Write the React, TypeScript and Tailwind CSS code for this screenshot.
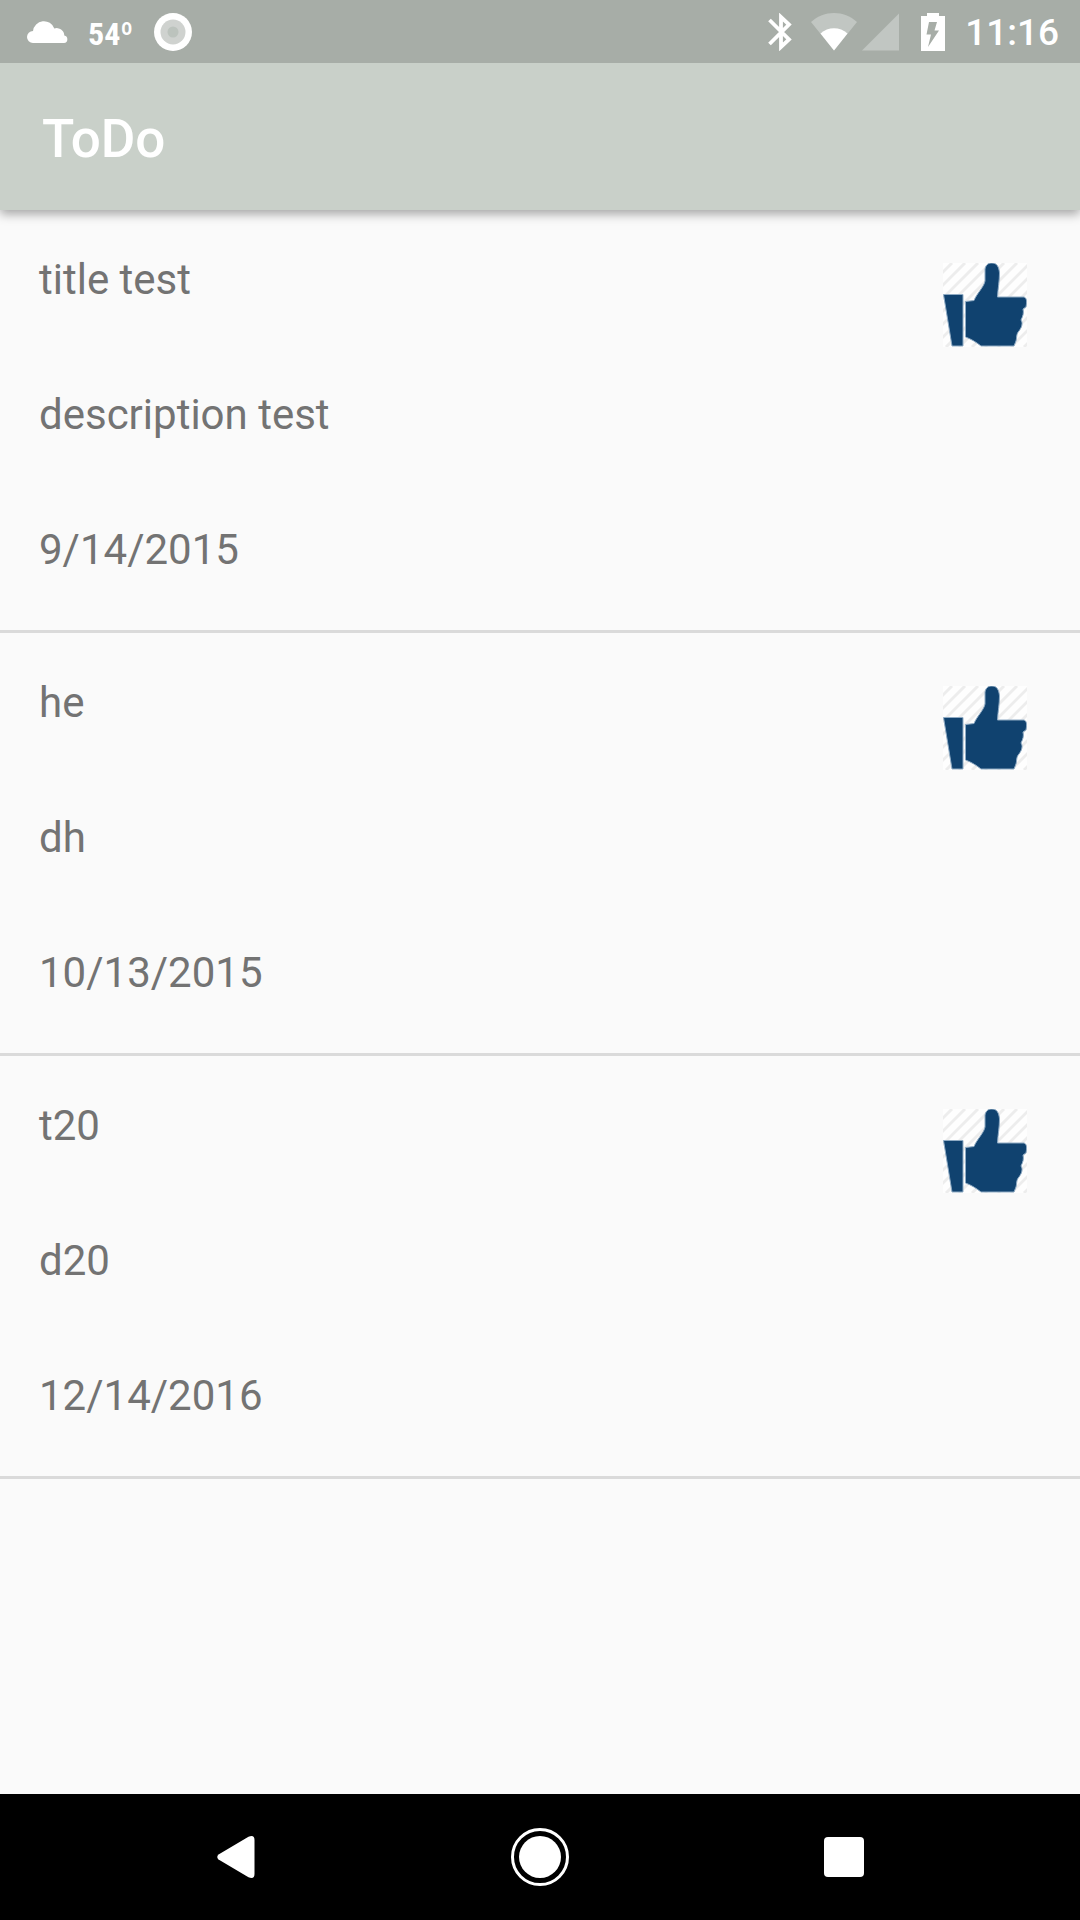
const items = [
  { title: 'title test', description: 'description test', date: '9/14/2015' },
  { title: 'he', description: 'dh', date: '10/13/2015' },
  { title: 't20', description: 'd20', date: '12/14/2016' },
];

const hatch = Array.from({ length: 14 }, (_, i) => i * 13 - 4);

function ThumbIcon() {
  return (
    <svg viewBox="0 0 84 84" className="h-[84px] w-[84px] shrink-0" role="img" aria-label="Thumbs up">
      <rect width="84" height="84" fill="#fefefe" />
      <g stroke="#ededed" strokeWidth="3">
        {hatch.map((x) => (
          <line key={x} x1={x} y1="0" x2={x - 84} y2="84" />
        ))}
      </g>
      <path
        fill="#10426f"
        stroke="#8fabc4"
        strokeWidth="1"
        d="M0.500 31.500 H20 V83 H9 Z M22.500 38.500 L31 37.500 C34 30 41 24 42 18 L42 6 C43 1 46 0 49 0 C54 0 56 4 56.500 10 C56.500 18 55 25 54.500 34 L81 34 C84 35 84 39 83 44 L80 46 C81 50 80 53 78 57 C80 60 79 64 76 68 C73 71 74 75 73 78 L71 83 H38 C33 79 28 76 22.500 74 Z"
      />
    </svg>
  );
}

function StatusBar() {
  return (
    <div className="z-20 flex h-[63px] items-center justify-between bg-[#a7ada7] pl-[27px] pr-[21px] text-white">
      <div className="flex items-center">
        <svg viewBox="0 0 41 23" className="h-[23px] w-[41px]" fill="#fff" aria-hidden="true">
          <path d="M6 23 A5.8 5.8 0 0 1 6 11 A11 11 0 0 1 27.300 8.500 A7.500 7.500 0 0 1 37.300 15.500 A3.800 3.800 0 0 1 37 23 Z" />
        </svg>
        <span className="ml-5 w-[66px] pt-1 font-['Roboto_Condensed',Roboto,sans-serif] text-[32px] leading-[42px] font-bold">
          54º
        </span>
        <svg viewBox="0 0 38 38" className="h-[38px] w-[38px]" aria-hidden="true">
          <circle cx="19" cy="19" r="19" fill="#fff" />
          <circle cx="19" cy="19" r="12.500" fill="#cfd2cf" />
          <circle cx="19" cy="19" r="5.500" fill="#bcc3bd" />
        </svg>
      </div>
      <div className="flex items-center">
        <svg viewBox="0 0 24 38" className="h-[38px] w-[24px]" fill="none" stroke="#fff" strokeWidth="3.800" aria-hidden="true">
          <path d="M1.500 7 L21 26.500 L13 34 V4 L21 11.500 L1.500 31" />
        </svg>
        <svg viewBox="0 0 46 38" className="ml-[19px] h-[38px] w-[46px]" aria-hidden="true">
          <path d="M0 9 C13 -3 33 -3 46 9 L23 37.500 Z" fill="#c1c6c2" />
          <path d="M9.500 20.500 C17 13.500 29 13.500 36.500 20.500 L23 37.500 Z" fill="#fff" />
        </svg>
        <svg viewBox="0 0 37 38" className="ml-[5px] h-[38px] w-[37px]" aria-hidden="true">
          <path d="M37 0.500 V37.500 H0 Z" fill="#c1c6c2" />
        </svg>
        <svg viewBox="0 0 24 38" className="ml-[22px] h-[38px] w-[24px]" aria-hidden="true">
          <path d="M6 0 H18 V3 H24 V38 H0 V3 H6 Z" fill="#fff" />
          <path d="M8 9 H16 L13.500 17.500 H18 L7 34 L10 21.500 H5.500 Z" fill="#a7ada7" />
        </svg>
        <span className="ml-5 pt-[3px] text-[37px] leading-[44px] font-medium">11:16</span>
      </div>
    </div>
  );
}

export default function App() {
  return (
    <div className="flex min-h-screen flex-col bg-[#fafafa] font-[Roboto,sans-serif]">
      <StatusBar />
      <header className="z-10 flex h-[147px] items-center bg-[#c9d0c9] px-[42px] pt-1 shadow-[0_4px_10px_rgba(0,0,0,0.35)]">
        <h1 className="text-[53px] leading-[64px] font-medium text-white">ToDo</h1>
      </header>
      <main className="flex-1">
        <ul>
          {items.map((item) => (
            <li
              key={item.title}
              className="flex items-start justify-between border-b-[3px] border-[#dadada] pt-[45px] pr-[53px] pb-[56px] pl-[39px]"
            >
              <div className="flex flex-col gap-[86px] text-[42px] leading-[49px] text-[#737373]">
                <h2>{item.title}</h2>
                <p>{item.description}</p>
                <p>{item.date}</p>
              </div>
              <div className="pt-2">
                <ThumbIcon />
              </div>
            </li>
          ))}
        </ul>
      </main>
      <nav className="grid h-[126px] grid-cols-3 bg-black px-[84px]">
        <button type="button" aria-label="Back" className="flex items-center justify-center">
          <svg viewBox="0 0 38 42" className="h-[42px] w-[38px]" fill="#fff" aria-hidden="true">
            <path d="M1.500 18.500 L31.500 0.800 Q37.500 -1.500 37.500 4 V38 Q37.500 43.500 31.500 41.200 L1.500 23.500 Q-1 21 1.500 18.500 Z" />
          </svg>
        </button>
        <button type="button" aria-label="Home" className="flex items-center justify-center">
          <svg viewBox="0 0 58 58" className="h-[58px] w-[58px]" aria-hidden="true">
            <circle cx="29" cy="29" r="27.500" fill="none" stroke="#fff" strokeWidth="3" />
            <circle cx="29" cy="29" r="21" fill="#fff" />
          </svg>
        </button>
        <button type="button" aria-label="Recent apps" className="flex items-center justify-center">
          <span className="h-10 w-10 rounded bg-white" />
        </button>
      </nav>
    </div>
  );
}
